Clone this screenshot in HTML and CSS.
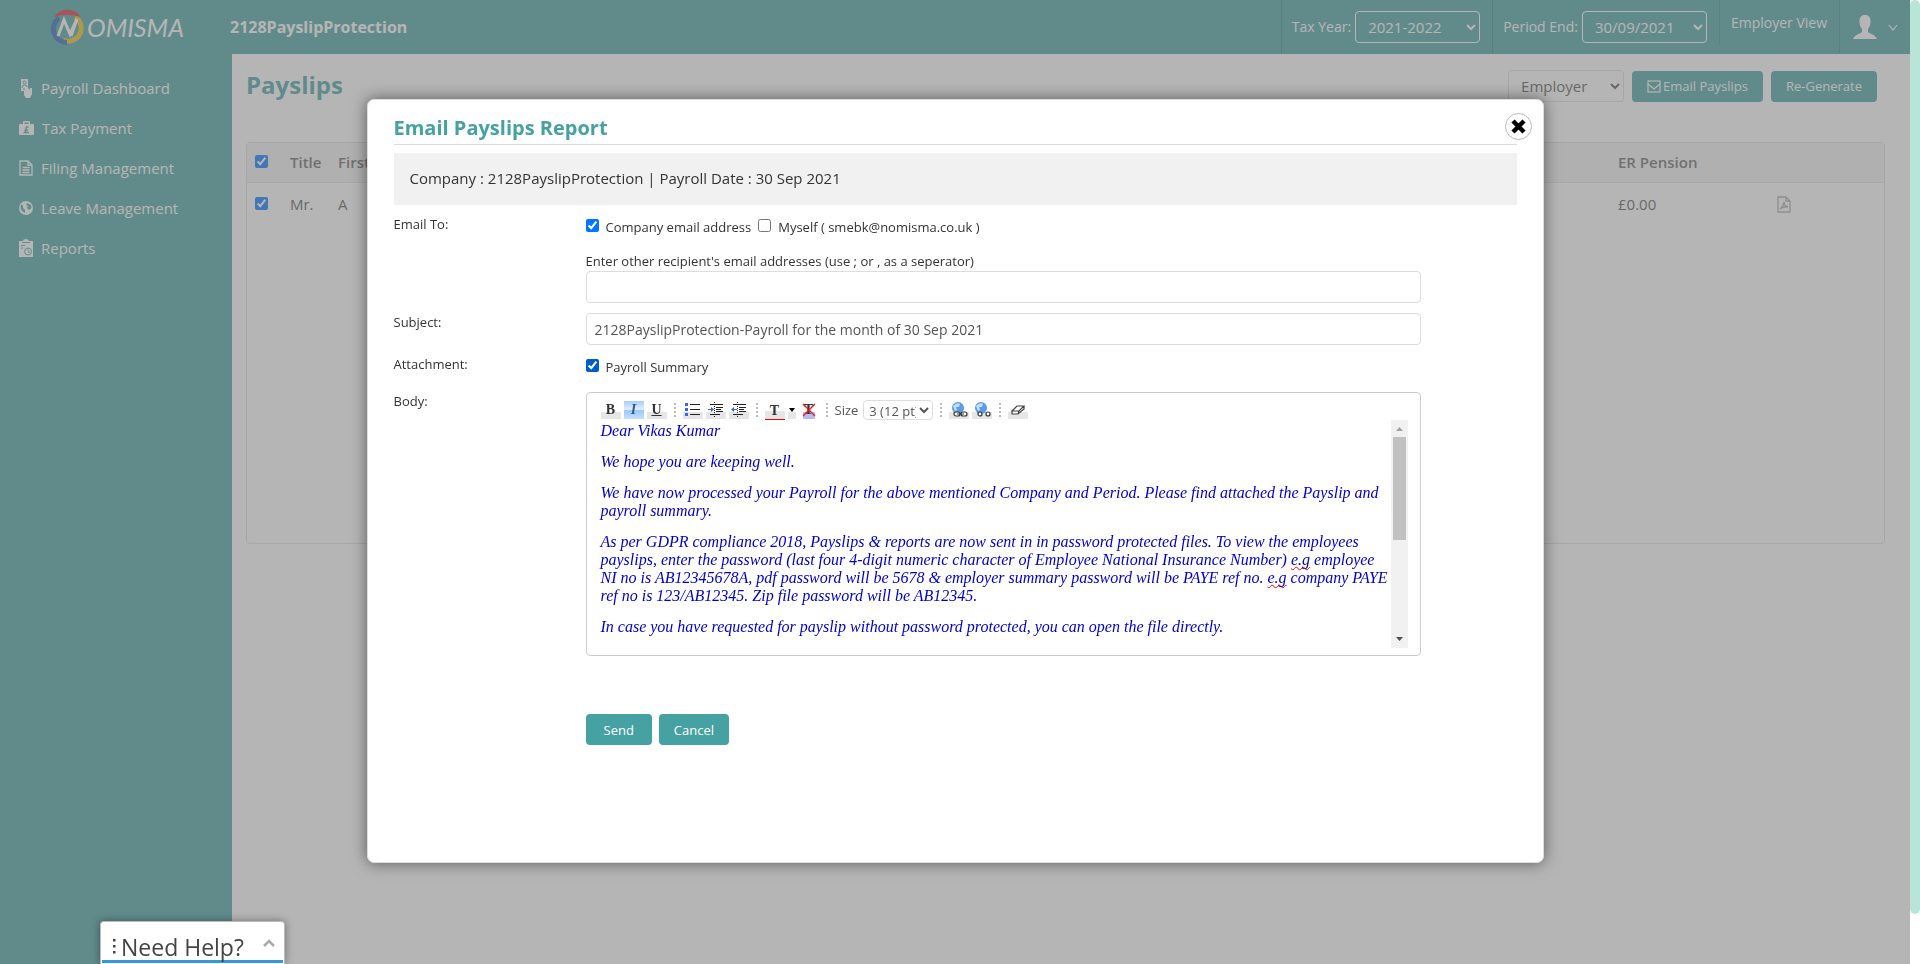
FILE: index.html
```html
<!DOCTYPE html>
<html lang="en">
<head>
<meta charset="utf-8">
<title>Payslips - Nomisma</title>
<link rel="stylesheet" href="styles.css">
</head>
<body>
<div class="page">
  <header class="topbar">
    <a class="logo" href="#" aria-label="Nomisma">
      <svg class="logo-mark" width="38" height="36" viewBox="0 0 38 36" aria-hidden="true">
        <path d="M26 8A13 13 0 0 1 14 31" fill="none" stroke="#e8c01e" stroke-width="5"/>
        <path d="M10 9A13.500 13.500 0 0 0 18 33.500" fill="none" stroke="#2467b4" stroke-width="5"/>
        <path d="M5 8A16 16 0 0 1 32 8Q18 4 5 8Z" fill="#e02a3c"/>
        <path d="M9 27L15 11L21 25L28 10" fill="none" stroke="#fff" stroke-width="3"/>
        <path d="M22 27L28 10" fill="none" stroke="#fff" stroke-width="3"/>
      </svg>
      <span class="logo-text">OMISMA</span>
    </a>
    <strong class="company">2128PayslipProtection</strong>
    <div class="top-cell">
      <label for="tax-year">Tax Year:</label>
      <select id="tax-year" class="top-select"><option>2021-2022</option></select>
    </div>
    <div class="top-cell">
      <label for="period-end">Period End:</label>
      <select id="period-end" class="top-select"><option>30/09/2021</option></select>
    </div>
    <div class="top-cell top-cell-short"><a class="top-link" href="#">Employer View</a></div>
    <div class="top-cell top-cell-user">
      <button class="user-button" aria-label="Account">
        <svg width="24" height="24" viewBox="0 0 24 24" fill="#fff"><path d="M12 0C8 0 6.500 2.500 6.500 6.500C6.500 10 7.500 12 9 14V17C7 19 2 19.500 0 24H24C22 19.500 17 19 15 17V14C16.500 12 17.500 10 17.500 6.500C17.500 2.500 16 0 12 0Z"/></svg>
        <svg width="10" height="7" viewBox="0 0 10 7" fill="none" stroke="#fff" stroke-width="1.200"><path d="M1 1L5 6L9 1"/></svg>
      </button>
    </div>
  </header>

  <div class="body-row">
    <nav class="sidebar">
      <a href="#">
        <svg width="14" height="19" viewBox="0 0 14 19"><path d="M2 0H9V9L11 11V9H13V15L11 19H7L5 16V12H2Z" fill="#fff"/><circle cx="5.500" cy="3.500" r="1.500" fill="none" stroke="#46a2a2"/><path d="M3 9Q3 6 5.500 6Q8 6 8 8M4 10H6" fill="none" stroke="#46a2a2"/></svg>
        <span>Payroll Dashboard</span></a>
      <a href="#">
        <svg width="15" height="14" viewBox="0 0 15 14"><path d="M0 4Q0 3 1 3H4V1Q4 0 5 0H10Q11 0 11 1V3H14Q15 3 15 4V13Q15 14 14 14H1Q0 14 0 13ZM5.500 3H9.500V1.500H5.500Z" fill="#fff" fill-rule="evenodd"/><path d="M9.500 6.500Q7 4.500 7 7.500Q7.500 10 5.500 11.500H10M5.500 9H9" fill="none" stroke="#46a2a2" stroke-width="1.300"/></svg>
        <span>Tax Payment</span></a>
      <a href="#">
        <svg width="14" height="16" viewBox="0 0 14 16" fill="none" stroke="#fff" stroke-width="1.300"><path d="M1 1H9L13 5V15H1ZM9 1V5H13M3.500 7.500H10.500M3.500 10H10.500M3.500 12.500H10.500"/></svg>
        <span>Filing Management</span></a>
      <a href="#">
        <svg width="14" height="14" viewBox="0 0 14 14"><circle cx="7" cy="7" r="7" fill="#fff"/><path d="M2 3L4 5L4 7L6 9L6 12L3 10L1.500 7ZM8 2L12 4L12.500 7L10 9L8 7L9 5L7 4Z" fill="#46a2a2"/></svg>
        <span>Leave Management</span></a>
      <a href="#">
        <svg width="14" height="18" viewBox="0 0 14 18"><path d="M0 2H4Q4 0 7 0Q9 0 10 2H14V18H0Z" fill="#fff"/><path d="M3 3.500H11M2 6.500H6M2 9H4" stroke="#46a2a2"/><circle cx="9" cy="12.500" r="3.500" fill="none" stroke="#46a2a2"/><path d="M9 10.500V12.500L11 13.500" fill="none" stroke="#46a2a2"/></svg>
        <span>Reports</span></a>
    </nav>

    <main class="content">
      <div class="content-head">
        <h1>Payslips</h1>
        <select class="view-select" aria-label="Payslip view"><option>Employer</option></select>
        <button class="btn">
          <svg width="14" height="13" viewBox="0 0 14 13" fill="none" stroke="#fff" stroke-width="1.200"><rect x="1" y="1" width="12" height="11"/><path d="M1 4L7 9L13 4"/></svg>
          Email Payslips</button>
        <button class="btn">Re-Generate</button>
      </div>
      <div class="table-box">
        <table class="grid">
          <thead>
            <tr><th class="c-check"><input type="checkbox" checked aria-label="Select all"></th><th class="c-title">Title</th><th>First Name</th><th class="c-pension">ER Pension</th><th class="c-pdf"></th></tr>
          </thead>
          <tbody>
            <tr><td><input type="checkbox" checked aria-label="Select row"></td><td>Mr.</td><td>A</td><td>£0.00</td><td>
              <a href="#" class="pdf" aria-label="Payslip PDF"><svg width="14" height="17" viewBox="0 0 14 17" fill="none" stroke="#aaa" stroke-width="1.300"><path d="M1 1H9L13 5V16H1ZM9 1V5H13M3 13Q6 11 7 6Q7 10 11 11Q7 10 3 13"/></svg></a></td></tr>
          </tbody>
        </table>
      </div>
    </main>
  </div>
</div>

<div class="overlay">
  <section class="modal" role="dialog" aria-labelledby="modal-title">
    <button class="close" aria-label="Close">
      <svg width="15" height="15" viewBox="0 0 15 15"><path d="M2 2L13 13M13 2L2 13" stroke="#000" stroke-width="4.500"/></svg>
    </button>
    <h2 id="modal-title">Email Payslips Report</h2>
    <p class="summary">Company : 2128PayslipProtection | Payroll Date : 30 Sep 2021</p>
    <form class="form">
      <span class="label">Email To:</span>
      <div class="field">
        <div class="check-row">
          <label><input type="checkbox" checked><span>Company email address</span></label>
          <label><input type="checkbox"><span>Myself ( smebk@nomisma.co.uk )</span></label>
        </div>
        <label class="hint" for="others">Enter other recipient's email addresses (use ; or , as a seperator)</label>
        <input id="others" class="text" type="text">
      </div>
      <label class="label" for="subject">Subject:</label>
      <input id="subject" class="text" type="text" value="2128PayslipProtection-Payroll for the month of 30 Sep 2021">
      <span class="label">Attachment:</span>
      <div class="check-row"><label><input class="pressed" type="checkbox" checked><span>Payroll Summary</span></label></div>
      <span class="label">Body:</span>
      <div class="editor">
        <div class="toolbar">
          <button type="button" class="tool" aria-label="Bold"><b>B</b></button>
          <button type="button" class="tool tool-on" aria-label="Italic"><i>I</i></button>
          <button type="button" class="tool" aria-label="Underline"><b><u>U</u></b></button>
          <span class="sep"></span>
          <button type="button" class="tool" aria-label="Bulleted list"><svg width="16" height="16" viewBox="0 0 16 16"><path d="M0 1H3V4H0ZM0 6H3V9H0ZM0 11H3V14H0Z" fill="#3465f5"/><path d="M5 2.500H15M5 7.500H15M5 12.500H15" stroke="#222"/></svg></button>
          <button type="button" class="tool" aria-label="Indent"><svg width="16" height="16" viewBox="0 0 16 16"><path d="M2 2.500H15M8 5.500H15M8 7.500H13M8 9.500H15M2 12.500H12" stroke="#222"/><path d="M6.500 0V16" stroke="#222" stroke-dasharray="1 1"/><path d="M0 7.500H4" stroke="#3465f5"/><path d="M3 5L6 7.500L3 10Z" fill="#3465f5"/></svg></button>
          <button type="button" class="tool" aria-label="Outdent"><svg width="16" height="16" viewBox="0 0 16 16"><path d="M2 2.500H15M8 5.500H15M8 7.500H13M8 9.500H15M2 12.500H12" stroke="#222"/><path d="M6.500 0V16" stroke="#222" stroke-dasharray="1 1"/><path d="M2 7.500H6" stroke="#3465f5"/><path d="M3 5L0 7.500L3 10Z" fill="#3465f5"/></svg></button>
          <span class="sep"></span>
          <button type="button" class="tool tool-colour" aria-label="Text colour"><b>T</b></button>
          <button type="button" class="tool tool-arrow" aria-label="More colours"><svg width="6" height="4" viewBox="0 0 6 4"><path d="M0 0H6L3 4Z"/></svg></button>
          <button type="button" class="tool tool-clear" aria-label="Clear colour"><b>T</b><svg width="14" height="14" viewBox="0 0 14 14"><path d="M1 1L13 13M13 1L1 13" stroke="#e8141e" stroke-width="1.300"/></svg></button>
          <span class="sep"></span>
          <label class="size-label" for="size">Size</label>
          <select id="size" class="size-select"><option>3 (12 pt)</option></select>
          <span class="sep"></span>
          <button type="button" class="tool" aria-label="Insert link"><svg width="17" height="16" viewBox="0 0 17 16"><circle cx="7" cy="6" r="6" fill="#5b9bea"/><path d="M2 4Q6 0 9 2L8 5L5 5L6 8L4 9Z" fill="#c4e0ff"/><g fill="#fff" stroke="#333" stroke-width="1.200"><rect x="3" y="10" width="6" height="4" rx="2"/><rect x="10" y="10" width="6" height="4" rx="2"/></g><path d="M6 12H13" stroke="#333"/></svg></button>
          <button type="button" class="tool" aria-label="Remove link"><svg width="17" height="16" viewBox="0 0 17 16"><circle cx="7" cy="6" r="6" fill="#5b9bea"/><path d="M2 4Q6 0 9 2L8 5L5 5L6 8L4 9Z" fill="#c4e0ff"/><g fill="#fff" stroke="#333" stroke-width="1.200"><rect x="4" y="10" width="4" height="4" rx="2"/><rect x="12" y="10" width="4" height="4" rx="2"/></g></svg></button>
          <span class="sep"></span>
          <button type="button" class="tool" aria-label="Remove formatting"><svg width="16" height="16" viewBox="0 0 16 16"><path d="M2 9L7 4H14L9 9ZM2 9V12H8L14 7V4M9 9L8 12" fill="#fff" stroke="#444" stroke-width="1.200"/></svg></button>
        </div>
        <div class="letter-wrap">
          <div class="letter" contenteditable="true" spellcheck="false" role="textbox" aria-label="Body">
            <p>Dear Vikas Kumar</p>
            <p>We hope you are keeping well.</p>
            <p>We have now processed your Payroll for the above mentioned Company and Period. Please find attached the Payslip and payroll summary.</p>
            <p>As per GDPR compliance 2018, Payslips &amp; reports are now sent in in password protected files. To view the employees payslips, enter the password (last four 4-digit numeric character of Employee National Insurance Number) <span class="typo">e.g</span> employee NI no is AB12345678A, pdf password will be 5678 &amp; employer summary password will be PAYE ref no. <span class="typo">e.g</span> company PAYE ref no is 123/AB12345. Zip file password will be AB12345.</p>
            <p>In case you have requested for payslip without password protected, you can open the file directly.</p>
          </div>
          <div class="scroll" aria-hidden="true">
            <svg width="17" height="17" viewBox="0 0 17 17"><path d="M5 11H12L8.500 7Z" fill="#a3a3a3"/></svg>
            <div class="scroll-thumb"></div>
            <svg class="scroll-down" width="17" height="17" viewBox="0 0 17 17"><path d="M5 6H12L8.500 10Z" fill="#505050"/></svg>
          </div>
        </div>
      </div>
      <div class="actions">
        <button type="button" class="btn btn-send">Send</button>
        <button type="button" class="btn">Cancel</button>
      </div>
    </form>
  </section>
</div>

<button class="help">
  <svg width="3" height="18" viewBox="0 0 3 18" fill="#444"><path d="M0 1H2.500V3.500H0ZM0 7H2.500V9.500H0ZM0 13H2.500V15.500H0Z"/></svg>
  <span>Need Help?</span>
  <svg class="help-chevron" width="12" height="8" viewBox="0 0 12 8" fill="none" stroke="#aaa" stroke-width="2.500"><path d="M1 7L6 2L11 7"/></svg>
</button>
<div class="page-scroll" aria-hidden="true"><div class="page-scroll-thumb"></div></div>
</body>
</html>
```
FILE: styles.css
```css
* { box-sizing: border-box; }

body {
  margin: 0;
  height: 100vh;
  overflow: hidden;
  font: 13px/18px "Open Sans", "Noto Sans", sans-serif;
  color: #333;
}

button, input, select { font-family: inherit; }
a { color: inherit; text-decoration: none; }
svg { display: block; flex: none; }
input[type="checkbox"] { width: 13px; height: 13px; margin: 0; flex: none; }

.page {
  display: flex;
  flex-direction: column;
  height: 100%;
  padding-right: 10px;
}

/* Top bar */
.topbar {
  display: flex;
  height: 54px;
  flex: none;
  background: #46a2a2;
  color: #fff;
  font-size: 14px;
}
.logo {
  display: flex;
  align-items: center;
  width: 230px;
  padding-left: 49px;
}
.logo-text { font: italic 25px/26px Lato, sans-serif; }
.company { flex: 1; align-self: center; font-size: 16px; }
.top-cell {
  display: flex;
  align-items: center;
  gap: 4px;
  padding: 0 12px 0 10px;
  border-left: 1px solid #3a8888;
}
.top-select {
  width: 125px;
  height: 32px;
  padding: 0 8px;
  border: 1px solid #fff;
  border-radius: 4px;
  background: transparent;
  color: #fff;
  font-size: 15px;
}
.top-cell-short { height: 45px; padding: 0 12px 0 11px; }
.top-cell-user { padding: 0 12px 0 13px; }
.user-button {
  display: flex;
  align-items: center;
  gap: 11px;
  padding: 0;
  border: 0;
  background: none;
}

.body-row { display: flex; flex: 1; }

/* Sidebar */
.sidebar {
  width: 232px;
  flex: none;
  padding: 14px 19px;
  background: #46a2a2;
  color: #fff;
  font-size: 15px;
}
.sidebar a { display: flex; align-items: center; gap: 8px; height: 40px; }

/* Content */
.content { flex: 1; padding: 16px 25px 0 14px; background: #fff; }
.content-head { display: flex; align-items: center; gap: 8px; padding-right: 8px; }
h1 {
  flex: 1;
  margin: 0;
  padding-bottom: 2px;
  color: #46a2a2;
  font-size: 24px;
  line-height: 30px;
}
.view-select {
  width: 116px;
  height: 32px;
  padding: 0 8px;
  border: 1px solid #ddd;
  border-radius: 4px;
  background: #fff;
  color: #555;
  font-size: 15px;
}
.btn {
  display: flex;
  align-items: center;
  gap: 2px;
  height: 31px;
  padding: 0 15px;
  border: 0;
  border-radius: 4px;
  background: #46a2a2;
  color: #fff;
  font-size: 13px;
}
.table-box {
  height: 402px;
  margin-top: 40px;
  border: 1px solid #ddd;
  border-radius: 4px;
}
.grid {
  width: 100%;
  border-collapse: collapse;
  table-layout: fixed;
  color: #555;
  font-size: 15px;
}
.grid th {
  height: 39px;
  padding: 0;
  border-bottom: 1px solid #e4e4e4;
  background: #f4f4f4;
  color: #666;
  font-weight: 600;
  text-align: left;
}
.grid td { height: 44px; padding: 0; }
.grid th:first-child, .grid td:first-child { padding-left: 8px; }
.c-check { width: 43px; }
.c-title { width: 48px; }
.c-pension { width: 159px; }
.c-pdf { width: 107px; }
.pdf { display: block; }

/* Dialog */
.overlay {
  position: fixed;
  inset: 0 10px 0 0;
  display: flex;
  justify-content: center;
  padding: 99px 0 101px;
  background: rgba(120, 120, 120, 0.55);
}
.modal {
  position: relative;
  width: 92%;
  max-width: 1177px;
  padding: 14px 26px;
  border: 1px solid #ddd;
  border-radius: 7px;
  background: #fff;
  box-shadow: 0 0 16px rgba(0, 0, 0, 0.5);
}
.close {
  position: absolute;
  top: 13px;
  right: 11px;
  display: grid;
  place-items: center;
  width: 27px;
  height: 27px;
  padding: 0;
  border: 1px solid #bbb;
  border-radius: 50%;
  background: #fff;
}
h2 {
  margin: 0 0 8px;
  padding-bottom: 2px;
  border-bottom: 1px solid #ddd;
  color: #46a2a2;
  font-size: 20px;
  line-height: 28px;
}
.summary {
  margin: 0 0 10px;
  padding: 15px 16px 17px;
  background: #f1f1f1;
  font-size: 15px;
  line-height: 20px;
}
.form {
  display: grid;
  grid-template-columns: 192px 1fr;
  align-items: start;
  row-gap: 10px;
  padding-right: 96px;
}
.field { display: grid; }
.check-row { display: flex; gap: 7px; padding: 3px 0 6px; }
.check-row label { display: flex; gap: 7px; }
.check-row input[type="checkbox"] { margin-top: 1px; }
.hint { padding-top: 9px; line-height: 20px; }
.text {
  width: 100%;
  height: 32px;
  padding: 0 8px;
  border: 1px solid #ddd;
  border-radius: 4px;
  color: #555;
  font-size: 14px;
}
.pressed { accent-color: #005cc8; }

/* Editor */
.editor {
  padding: 7px 12px;
  border: 1px solid #ccc;
  border-radius: 4px;
}
.toolbar { display: flex; align-items: center; gap: 3px; height: 20px; padding-left: 2px; }
.tool {
  display: grid;
  place-items: center;
  width: 20px;
  height: 18px;
  padding: 0;
  border: 0;
  background: linear-gradient(#fff 60%, #e6e6e6 60%);
  color: #333;
  font: 14px/16px "Liberation Serif", serif;
}
.tool-on { background: linear-gradient(#a9cdfb, #e2f0ff 50%, #9cc6fa 50%, #c4e0ff); color: #2c5a8c; font-weight: bold; }
.tool-colour { height: 20px; padding-top: 3px; border-bottom: 1px solid #f00; }
.tool-arrow { width: 8px; }
.tool-clear { background: linear-gradient(#fff 60%, #b4bcf0 60%) center / 12px 100% no-repeat; }
.tool-clear > * { grid-area: 1 / 1; }
.sep {
  width: 2px;
  height: 14px;
  margin: 0 4px;
  background: repeating-linear-gradient(#bbb 0 2px, transparent 2px 4px);
}
.size-label { margin-right: 2px; color: #555; }
.size-select {
  width: 70px;
  height: 20px;
  padding: 0 0 0 1px;
  border: 1px solid #ddd;
  border-radius: 4px;
  background: #fff;
  color: #555;
  font-size: 13px;
}
.letter-wrap { display: flex; height: 228px; }
.letter {
  flex: 1;
  overflow: hidden;
  padding: 2px 0 0 2px;
  color: #0000cd;
  font: italic 16px/18px "Liberation Serif", serif;
}
.letter p { margin: 0 0 13px; }
.typo { text-decoration: underline wavy #f00 1px; text-decoration-skip-ink: none; }
.scroll {
  display: flex;
  flex-direction: column;
  width: 17px;
  background: #f1f1f1;
}
.scroll-thumb { height: 45%; margin: 0 2px; background: #c1c1c1; }
.scroll-down { margin-top: auto; }

.actions { grid-column: 2; display: flex; gap: 7px; margin-top: 48px; }
.btn-send { padding: 0 18px; }

/* Help tab */
.help {
  position: fixed;
  left: 100px;
  bottom: 0;
  display: flex;
  align-items: center;
  gap: 5px;
  width: 185px;
  height: 43px;
  padding: 7px 9px 0 12px;
  border: 1px solid #bbb;
  border-bottom: 0;
  border-radius: 4px 4px 0 0;
  background: linear-gradient(#3498db, #3498db) 1px 38px / 181px 3px no-repeat #fff;
  box-shadow: 0 0 8px rgba(0, 0, 0, 0.4);
  color: #444;
  font-size: 23px;
}
.help-chevron { margin: 0 0 8px auto; }

/* Page scrollbar */
.page-scroll { position: fixed; inset: 0 0 0 auto; width: 10px; background: #fff; }
.page-scroll-thumb { height: calc(100% - 50px); border-radius: 5px; background: #b9e5d8; }
```
